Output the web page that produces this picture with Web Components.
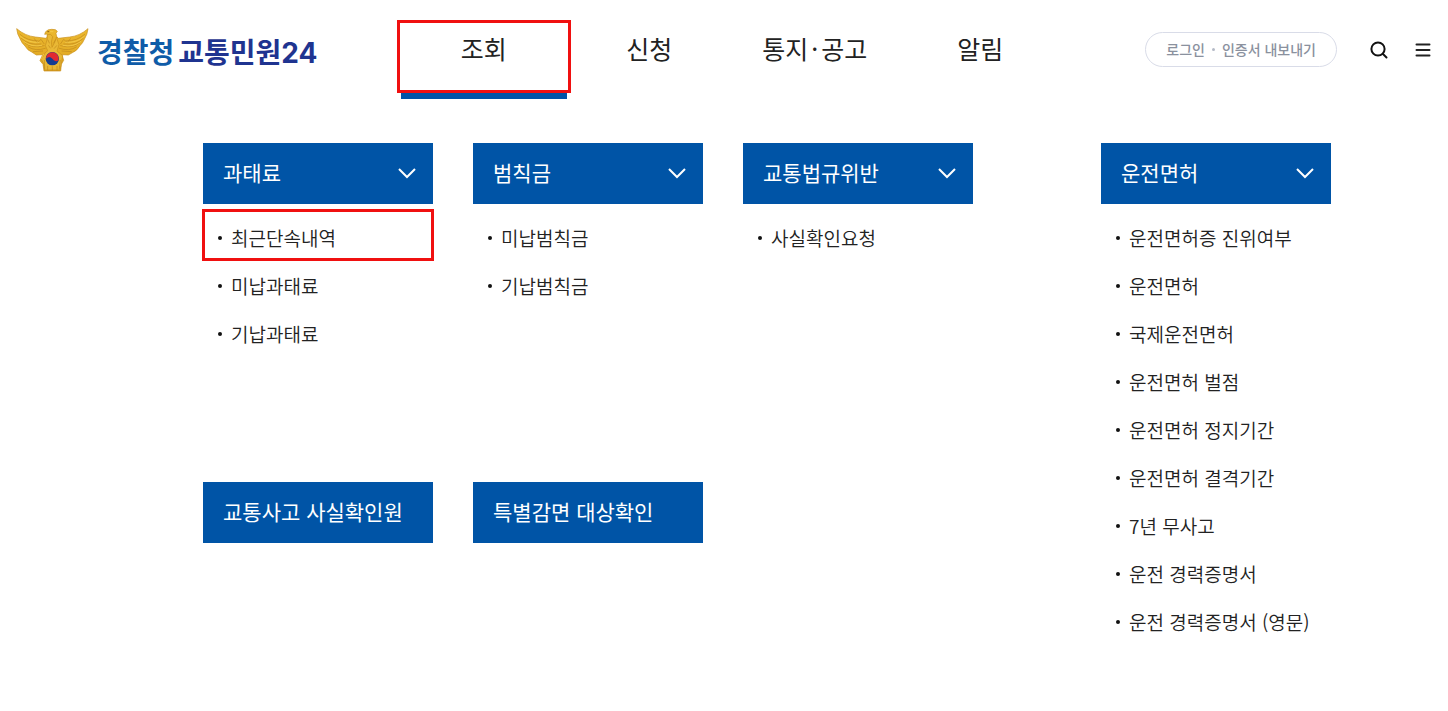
<!DOCTYPE html>
<html lang="ko">
<head>
<meta charset="utf-8">
<meta name="viewport" content="width=device-width, initial-scale=1">
<title>경찰청 교통민원24</title>
<style>
  body {
    margin: 0;
    background: #fff;
    color: #222;
    font-family: "Noto Sans CJK KR", "Noto Sans", sans-serif;
  }
</style>
</head>
<body>
<site-header>
  <site-logo slot="logo"><span>경찰청</span></site-logo>
  <nav-item href="#search" active marked>조회</nav-item>
  <nav-item href="#apply">신청</nav-item>
  <nav-item href="#notice">통지<span>·</span>공고</nav-item>
  <nav-item href="#news">알림</nav-item>
</site-header>

<mega-menu>
  <menu-group heading="과태료" expandable>
    <menu-entry href="#recent" marked>최근단속내역</menu-entry>
    <menu-entry href="#fine-unpaid">미납과태료</menu-entry>
    <menu-entry href="#fine-paid">기납과태료</menu-entry>
  </menu-group>
  <menu-group heading="범칙금" expandable>
    <menu-entry href="#penalty-unpaid">미납범칙금</menu-entry>
    <menu-entry href="#penalty-paid">기납범칙금</menu-entry>
  </menu-group>
  <menu-group heading="교통법규위반" expandable>
    <menu-entry href="#fact-check">사실확인요청</menu-entry>
  </menu-group>
  <menu-group heading="교통사고 사실확인원"></menu-group>
  <menu-group heading="특별감면 대상확인"></menu-group>
  <menu-group slot="side" heading="운전면허" expandable>
    <menu-entry href="#verify">운전면허증 진위여부</menu-entry>
    <menu-entry href="#license">운전면허</menu-entry>
    <menu-entry href="#international">국제운전면허</menu-entry>
    <menu-entry href="#points">운전면허 벌점</menu-entry>
    <menu-entry href="#suspension">운전면허 정지기간</menu-entry>
    <menu-entry href="#disqualified">운전면허 결격기간</menu-entry>
    <menu-entry href="#no-accident">7년 무사고</menu-entry>
    <menu-entry href="#career">운전 경력증명서</menu-entry>
    <menu-entry href="#career-en">운전 경력증명서 (영문)</menu-entry>
  </menu-group>
</mega-menu>

<script>
"use strict";
(() => {
  customElements.define("site-logo", class extends HTMLElement {
    constructor() {
      super();

      this.attachShadow({mode: "open"}).innerHTML = `
        <style>
          :host {
            display: block;
          }

          a {
            display: flex;
            align-items: center;
            gap: 8px;
            color: #1f3490;
            font-size: 28px;
            font-weight: 700;
            line-height: 44px;
            text-decoration: none;
            white-space: nowrap;
          }

          #name {
            display: flex;
            gap: 4px;
            padding-top: 4px;
          }

          #number {
            font-family: Inter, sans-serif;
          }

          ::slotted(span) {
            color: #0f5ca8;
          }
        </style>

        <a href="#home">
          <svg width="73" height="44" viewBox="48 38 219 132" aria-hidden="true">
            <defs>
              <linearGradient id="gold" x1="0" y1="0" x2="0" y2="1">
                <stop offset="0" stop-color="#ecb92f"/>
                <stop offset="1" stop-color="#dda31f"/>
              </linearGradient>
            </defs>
            <g stroke="#c98f1c" stroke-width="2" stroke-linejoin="round">
              <path fill="url(#gold)" d="M50 40 Q76 62 106 65 L139 69 Q143 63 142 56 L134 57 L137 49 Q143 42 155 42 Q168 41 172 48 L168 54 Q168 65 175 69 L209 65 Q239 62 264 40 Q262 58 254 70 Q248 84 240 91 Q231 106 219 111 L205 119 L186 118 L191 135 L184 147 L182 167 L132 167 L129 147 L120 136 L128 118 L109 119 L95 110 Q82 105 75 92 Q65 83 60 70 Q52 58 50 40Z"/>
              <path fill="#e9b835" d="M142 58 Q153 53 158 64 Q151 80 156 96 Q167 79 169 65 L177 88 L171 107 L188 121 L184 145 L180 164 L134 164 L131 145 L124 132 L135 113 L143 106 L136 91 L142 70Z"/>
            </g>
            <g fill="none" stroke="#c0881d" stroke-width="2" stroke-linecap="round">
              <path d="M60 57 Q82 77 115 77 M64 69 Q86 91 123 86 M75 83 Q96 101 132 91 M85 95 Q106 109 136 99 M100 109 L128 107 M103 70 L112 82 L123 72 L132 85"/>
              <path d="M254 57 Q232 77 199 77 M250 69 Q228 91 191 86 M239 83 Q218 101 182 91 M229 95 Q208 109 178 99 M214 109 L186 107 M211 70 L202 82 L191 72 L182 85"/>
              <path d="M144 74 L148 83 M166 74 L161 83 M146 91 L151 98 M170 91 L163 99 M133 135 L134 160 M143 153 V164 M157 154 V164 M171 153 V164 M181 135 L178 160"/>
            </g>
            <g fill="none" stroke="#f8d157" stroke-width="2">
              <path d="M61 63 Q84 83 118 81 M71 78 Q94 97 126 90 M253 63 Q230 83 196 81 M243 78 Q220 97 188 90 M147 49 H160 M131 116 L124 132"/>
            </g>
            <path d="M142 49 h6" stroke="#8a5c14" stroke-width="3"/>
            <circle cx="157" cy="130" r="20" fill="#153c91"/>
            <path fill="#e22831" d="M138 130 A19 19 0 0 1 176 130 Q174 140 166 137 Q161 135 157 130 Q148 120 138 130Z"/>
          </svg>
          <span id="name"><slot></slot><span>교통민원<span id="number">24</span></span></span>
        </a>
      `;
    }
  });

  customElements.define("nav-item", class extends HTMLElement {
    constructor() {
      super();

      this.attachShadow({mode: "open"}).innerHTML = `
        <style>
          :host {
            display: block;
            position: relative;
          }

          a {
            display: flex;
            justify-content: center;
            align-items: center;
            box-sizing: border-box;
            height: 99px;
            padding-top: 2px;
            border-bottom: 6px solid transparent;
            color: #222;
            font-size: 25px;
            line-height: 36px;
            text-decoration: none;
            white-space: nowrap;
          }

          ::slotted(span) {
            padding: 0 3px;
          }

          :host([active]) a {
            border-bottom-color: #0054a6;
          }

          :host([marked])::after {
            content: "";
            position: absolute;
            inset: 20px -4px 6px;
            border: 3px solid #f01010;
            pointer-events: none;
          }
        </style>

        <a><slot></slot></a>
      `;
    }

    connectedCallback() {
      this.shadowRoot.querySelector("a").href = this.getAttribute("href");
    }
  });

  customElements.define("site-header", class extends HTMLElement {
    constructor() {
      super();

      this.attachShadow({mode: "open"}).innerHTML = `
        <style>
          :host {
            display: block;
          }

          header {
            display: grid;
            grid-template-columns: 1fr minmax(0, 662px) 1fr;
            align-items: center;
            padding-left: 16px;
          }

          nav {
            display: grid;
            grid-template-columns: repeat(4, 1fr);
          }

          #tools {
            display: flex;
            justify-content: flex-end;
            align-items: center;
            gap: 20px;
            padding-right: 13px;
          }

          #login {
            display: flex;
            align-items: center;
            gap: 7px;
            margin-right: 10px;
            padding: 0 20px;
            border: 1px solid #d9dce8;
            border-radius: 18px;
            color: #8a919e;
            font-size: 14px;
            font-weight: 500;
            line-height: 33px;
            text-decoration: none;
            white-space: nowrap;
          }

          #login i {
            width: 3px;
            height: 3px;
            border-radius: 50%;
            background: #b4bac6;
          }

          button {
            display: flex;
            justify-content: center;
            width: 24px;
            padding: 0;
            border: 0;
            background: none;
            cursor: pointer;
          }
        </style>

        <header>
          <slot name="logo"></slot>
          <nav aria-label="주 메뉴"><slot></slot></nav>
          <div id="tools">
            <a id="login" href="#login"><span>로그인</span><i></i><span>인증서 내보내기</span></a>
            <button type="button" aria-label="검색">
              <svg width="24" height="24" viewBox="0 0 24 24" fill="none" stroke="#111" stroke-width="2" stroke-linecap="round">
                <circle cx="11" cy="11" r="6.6"/>
                <path d="M16 16 L19.5 19.5"/>
              </svg>
            </button>
            <button type="button" aria-label="전체 메뉴">
              <svg width="24" height="24" viewBox="0 0 24 24" fill="none" stroke="#222" stroke-width="2" stroke-linecap="round">
                <path d="M5.5 6.5 H18.5 M5.5 12 H18.5 M5.5 17.5 H18.5"/>
              </svg>
            </button>
          </div>
        </header>
      `;
    }
  });

  customElements.define("menu-entry", class extends HTMLElement {
    constructor() {
      super();

      this.attachShadow({mode: "open"}).innerHTML = `
        <style>
          :host {
            display: block;
            position: relative;
          }

          a {
            display: flex;
            align-items: center;
            gap: 9px;
            padding-left: 15px;
            color: #222;
            font-size: 19px;
            font-weight: 350;
            line-height: 48px;
            text-decoration: none;
            white-space: nowrap;
          }

          a::before {
            content: "";
            width: 4px;
            height: 4px;
            border-radius: 50%;
            background: #111;
          }

          :host([marked])::after {
            content: "";
            position: absolute;
            inset: -5px -1px 1px;
            border: 3px solid #f01010;
            pointer-events: none;
          }
        </style>

        <a><slot></slot></a>
      `;
    }

    connectedCallback() {
      this.setAttribute("role", "listitem");
      this.shadowRoot.querySelector("a").href = this.getAttribute("href");
    }
  });

  customElements.define("menu-group", class extends HTMLElement {
    constructor() {
      super();

      this.attachShadow({mode: "open"}).innerHTML = `
        <style>
          :host {
            display: block;
          }

          #heading {
            display: flex;
            justify-content: space-between;
            align-items: center;
            box-sizing: border-box;
            width: 100%;
            padding: 0 16px 2px 20px;
            border: 0;
            background: #0054a6;
            color: #fff;
            font-family: inherit;
            font-size: 21px;
            font-weight: 400;
            line-height: 59px;
            text-align: left;
            white-space: nowrap;
            cursor: pointer;
          }

          #heading svg {
            display: none;
          }

          :host([expandable]) #heading svg {
            display: block;
          }

          #entries {
            padding-top: 10px;
          }

          #entries[hidden] {
            display: none;
          }
        </style>

        <button type="button" id="heading">
          <span id="label"></span>
          <svg width="20" height="14" viewBox="0 0 20 14" fill="none" stroke="#fff" stroke-width="2" aria-hidden="true">
            <path d="M2 3 L10 11 L18 3"/>
          </svg>
        </button>
        <div id="entries" role="list"><slot></slot></div>
      `;

      this.headingElem = this.shadowRoot.getElementById("heading");
      this.entriesElem = this.shadowRoot.getElementById("entries");

      this.headingElem.addEventListener("click", () => {
        if (this.hasAttribute("expandable")) {
          this.entriesElem.hidden = !this.entriesElem.hidden;
          this.headingElem.setAttribute("aria-expanded", !this.entriesElem.hidden);
        }
      });
    }

    connectedCallback() {
      this.shadowRoot.getElementById("label").textContent = this.getAttribute("heading");
      if (this.hasAttribute("expandable")) {
        this.headingElem.setAttribute("aria-expanded", "true");
      } else {
        this.entriesElem.hidden = true;
      }
    }
  });

  customElements.define("mega-menu", class extends HTMLElement {
    constructor() {
      super();

      this.attachShadow({mode: "open"}).innerHTML = `
        <style>
          :host {
            display: flex;
            justify-content: space-between;
            align-items: flex-start;
            gap: 40px;
            padding: 44px 117px 44px 203px;
          }

          #groups {
            flex: 0 1 770px;
            display: grid;
            grid-template-columns: repeat(3, minmax(0, 1fr));
            gap: 124px 40px;
          }

          #side {
            flex: 0 0 230px;
          }
        </style>

        <div id="groups"><slot></slot></div>
        <div id="side"><slot name="side"></slot></div>
      `;
    }
  });
})();
</script>
</body>
</html>
